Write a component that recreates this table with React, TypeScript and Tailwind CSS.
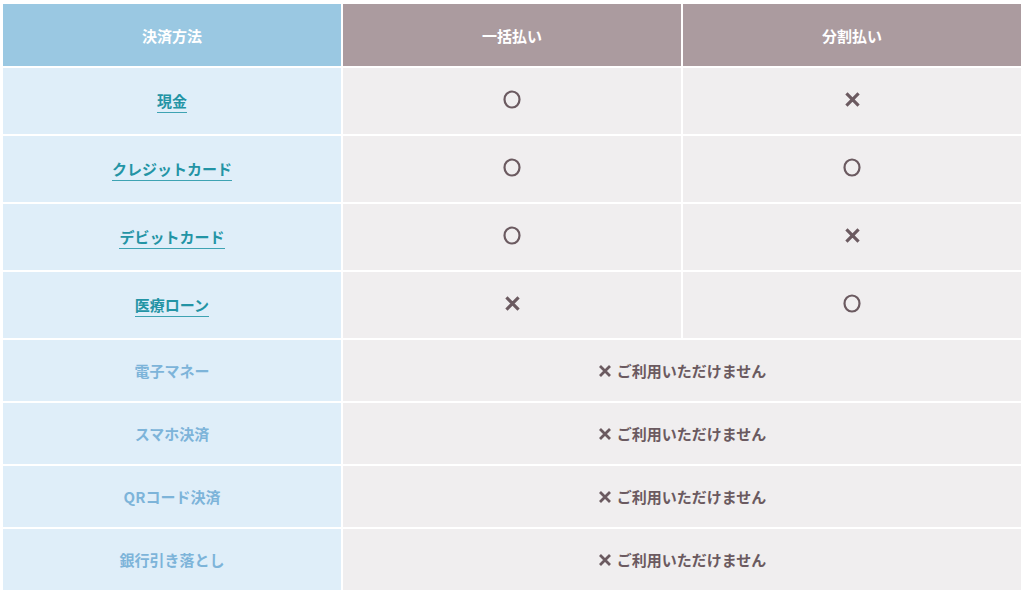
import React from "react";

type Mark = "ok" | "ng";

interface Row {
	label: string;
	link: boolean;
	lump?: Mark;
	split?: Mark;
}

const ROWS: Row[] = [
	{ label: "現金", link: true, lump: "ok", split: "ng" },
	{ label: "クレジットカード", link: true, lump: "ok", split: "ok" },
	{ label: "デビットカード", link: true, lump: "ok", split: "ng" },
	{ label: "医療ローン", link: true, lump: "ng", split: "ok" },
	{ label: "電子マネー", link: false },
	{ label: "スマホ決済", link: false },
	{ label: "QRコード決済", link: false },
	{ label: "銀行引き落とし", link: false },
];

const FONT = {
	fontFamily: '"Noto Sans CJK JP", "Noto Sans", sans-serif',
};

function Circle() {
	return (
		<svg width="18" height="19" viewBox="0 0 18 19" aria-label="○">
			<ellipse cx="9" cy="9.5" rx="7.5" ry="8" fill="none" stroke="#6b5a60" strokeWidth="2.2" />
		</svg>
	);
}

function Cross({ size = 14, weight = 2.8 }: { size?: number; weight?: number }) {
	return (
		<svg width={size} height={size} viewBox="0 0 14 14" aria-label="×">
			<path d="M2 2 L12 12 M12 2 L2 12" stroke="#6b5a60" strokeWidth={weight} strokeLinecap="butt" />
		</svg>
	);
}

function MarkCell({ mark }: { mark: Mark }) {
	return (
		<div className="bg-[#f0eeef] h-[66px] pb-[4px] flex items-center justify-center">
			{mark === "ok" ? <Circle /> : <Cross size={17} weight={2.6} />}
		</div>
	);
}

export default function App() {
	return (
		<div className="bg-white w-[1024px] h-[600px] pt-[4px] px-[3px]" style={FONT}>
			<div className="grid grid-cols-3 gap-[2px] text-[15px] font-bold leading-none">
				{/* header */}
				<div className="bg-[#9ac8e2] h-[62px] flex items-center justify-center text-white">
					決済方法
				</div>
				<div className="bg-[#ab9b9f] h-[62px] flex items-center justify-center text-white">
					一括払い
				</div>
				<div className="bg-[#ab9b9f] h-[62px] flex items-center justify-center text-white">
					分割払い
				</div>

				{ROWS.map((row) =>
					row.link ? (
						<React.Fragment key={row.label}>
							<div className="bg-[#dfeef9] h-[66px] flex items-center justify-center">
								<span className="inline-block text-[#2394a5] leading-[18px] pt-[2px] pb-[2px] border-b border-[#3ea3b3]">
									{row.label}
								</span>
							</div>
							<MarkCell mark={row.lump!} />
							<MarkCell mark={row.split!} />
						</React.Fragment>
					) : (
						<React.Fragment key={row.label}>
							<div className="bg-[#dfeef9] h-[61px] flex items-center justify-center text-[#7db4d9]">
								{row.label}
							</div>
							<div className="col-span-2 bg-[#f0eeef] h-[61px] flex items-center justify-center gap-[5px] text-[#6b5a60]">
								<Cross size={14} weight={2.8} />
								<span>ご利用いただけません</span>
							</div>
						</React.Fragment>
					)
				)}
			</div>
		</div>
	);
}
